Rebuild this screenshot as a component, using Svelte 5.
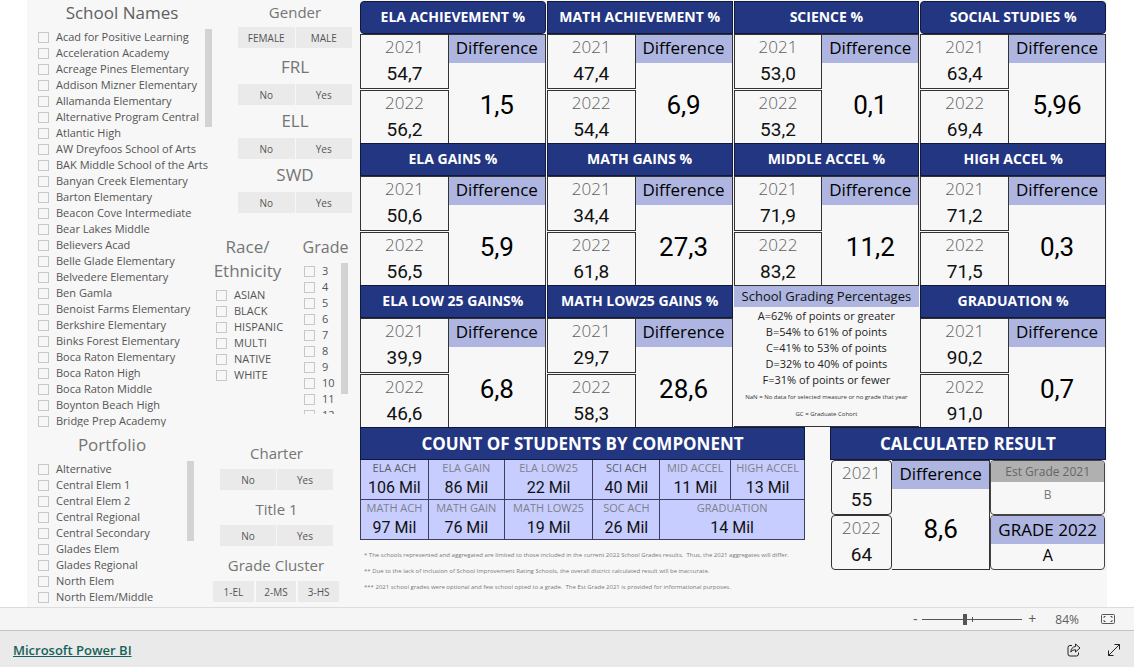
<script lang="ts">
  type Metric = {
    title: string;
    prev: string;
    curr: string;
    diff: string;
    rounded?: boolean;
  };

  const schools = [
    'Acad for Positive Learning',
    'Acceleration Academy',
    'Acreage Pines Elementary',
    'Addison Mizner Elementary',
    'Allamanda Elementary',
    'Alternative Program Central',
    'Atlantic High',
    'AW Dreyfoos School of Arts',
    'BAK Middle School of the Arts',
    'Banyan Creek Elementary',
    'Barton Elementary',
    'Beacon Cove Intermediate',
    'Bear Lakes Middle',
    'Believers Acad',
    'Belle Glade Elementary',
    'Belvedere Elementary',
    'Ben Gamla',
    'Benoist Farms Elementary',
    'Berkshire Elementary',
    'Binks Forest Elementary',
    'Boca Raton Elementary',
    'Boca Raton High',
    'Boca Raton Middle',
    'Boynton Beach High',
    'Bridge Prep Academy'
  ];

  const portfolios = [
    'Alternative',
    'Central Elem 1',
    'Central Elem 2',
    'Central Regional',
    'Central Secondary',
    'Glades Elem',
    'Glades Regional',
    'North Elem',
    'North Elem/Middle'
  ];

  const races = ['ASIAN', 'BLACK', 'HISPANIC', 'MULTI', 'NATIVE', 'WHITE'];
  const grades = ['3', '4', '5', '6', '7', '8', '9', '10', '11', '12'];

  const topToggles = [
    { title: 'Gender', options: ['FEMALE', 'MALE'] },
    { title: 'FRL', options: ['No', 'Yes'] },
    { title: 'ELL', options: ['No', 'Yes'] },
    { title: 'SWD', options: ['No', 'Yes'] }
  ];

  const bottomToggles = [
    { title: 'Charter', options: ['No', 'Yes'] },
    { title: 'Title 1', options: ['No', 'Yes'] },
    { title: 'Grade Cluster', options: ['1-EL', '2-MS', '3-HS'] }
  ];

  // null marks the slot that holds the grading scale
  const metrics: (Metric | null)[] = [
    { title: 'ELA ACHIEVEMENT %', prev: '54,7', curr: '56,2', diff: '1,5', rounded: true },
    { title: 'MATH ACHIEVEMENT %', prev: '47,4', curr: '54,4', diff: '6,9' },
    { title: 'SCIENCE %', prev: '53,0', curr: '53,2', diff: '0,1' },
    { title: 'SOCIAL STUDIES %', prev: '63,4', curr: '69,4', diff: '5,96', rounded: true },
    { title: 'ELA GAINS %', prev: '50,6', curr: '56,5', diff: '5,9' },
    { title: 'MATH GAINS %', prev: '34,4', curr: '61,8', diff: '27,3' },
    { title: 'MIDDLE ACCEL %', prev: '71,9', curr: '83,2', diff: '11,2' },
    { title: 'HIGH ACCEL %', prev: '71,2', curr: '71,5', diff: '0,3' },
    { title: 'ELA LOW 25 GAINS%', prev: '39,9', curr: '46,6', diff: '6,8' },
    { title: 'MATH LOW25 GAINS %', prev: '29,7', curr: '58,3', diff: '28,6' },
    null,
    { title: 'GRADUATION %', prev: '90,2', curr: '91,0', diff: '0,7' }
  ];

  const scale = [
    'A=62% of points or greater',
    'B=54% to 61% of points',
    'C=41% to 53% of points',
    'D=32% to 40% of points',
    'F=31% of points or fewer'
  ];

  const countWidths = [68, 76, 89, 67, 71, 74];
  const countTotal = countWidths.reduce((a, b) => a + b, 0);

  const counts = [
    [
      { label: 'ELA ACH', value: '106 Mil', span: 1, dark: true },
      { label: 'ELA GAIN', value: '86 Mil', span: 1 },
      { label: 'ELA LOW25', value: '22 Mil', span: 1 },
      { label: 'SCI ACH', value: '40 Mil', span: 1, dark: true },
      { label: 'MID ACCEL', value: '11 Mil', span: 1 },
      { label: 'HIGH ACCEL', value: '13 Mil', span: 1 }
    ],
    [
      { label: 'MATH ACH', value: '97 Mil', span: 1 },
      { label: 'MATH GAIN', value: '76 Mil', span: 1 },
      { label: 'MATH LOW25', value: '19 Mil', span: 1 },
      { label: 'SOC ACH', value: '26 Mil', span: 1 },
      { label: 'GRADUATION', value: '14 Mil', span: 2 }
    ]
  ];

  let zoom = $state(84);
</script>

{#snippet checkList(items: string[])}
  <ul class="check-list">
    {#each items as item}
      <li>
        <label><input type="checkbox" />{item}</label>
      </li>
    {/each}
  </ul>
{/snippet}

{#snippet toggle(title: string, options: string[])}
  <section class="toggle" aria-label={title}>
    <h2>{title}</h2>
    <div class="toggle-buttons">
      {#each options as option}
        <button type="button">{option}</button>
      {/each}
    </div>
  </section>
{/snippet}

{#snippet yearBox(year: string, value: string)}
  <div class="year-box">
    <span class="year">{year}</span>
    <span class="value">{value}</span>
  </div>
{/snippet}

{#snippet diffBox(value: string)}
  <div class="diff-box">
    <h3>Difference</h3>
    <p>{value}</p>
  </div>
{/snippet}

<div class="report">
  <aside class="filters">
    <div class="lists">
      <section>
        <h2 class="schools-title">School Names</h2>
        <div class="scroller schools">
          {@render checkList(schools)}
          <div class="scrollbar"></div>
        </div>
      </section>
      <section>
        <h2 class="portfolio-title">Portfolio</h2>
        <div class="scroller portfolio">
          {@render checkList(portfolios)}
          <div class="scrollbar"></div>
        </div>
      </section>
    </div>

    <div class="slicers">
      <div class="toggles top">
        {#each topToggles as t}
          {@render toggle(t.title, t.options)}
        {/each}
      </div>

      <div class="demographics">
        <section class="race">
          <h2>Race/<br />Ethnicity</h2>
          {@render checkList(races)}
        </section>
        <section class="grade">
          <h2>Grade</h2>
          <div class="scroller grades">
            {@render checkList(grades)}
            <div class="scrollbar"></div>
          </div>
        </section>
      </div>

      <div class="toggles bottom">
        {#each bottomToggles as t}
          {@render toggle(t.title, t.options)}
        {/each}
      </div>
    </div>
  </aside>

  <main>
    <div class="metrics">
      {#each metrics as m}
        {#if m}
          <article class="card">
            <h2 class="banner" class:rounded={m.rounded}>{m.title}</h2>
            <div class="card-body">
              <div class="years">
                {@render yearBox('2021', m.prev)}
                {@render yearBox('2022', m.curr)}
              </div>
              {@render diffBox(m.diff)}
            </div>
          </article>
        {:else}
          <article class="scale">
            <h2>School Grading Percentages</h2>
            {#each scale as line}
              <p>{line}</p>
            {/each}
            <small>NaN = No data for selected measure or no grade that year</small>
            <small>GC = Graduate Cohort</small>
          </article>
        {/if}
      {/each}
    </div>

    <div class="summary">
      <section class="counts">
        <h2 class="banner large">COUNT OF STUDENTS BY COMPONENT</h2>
        <table>
          <colgroup>
            {#each countWidths as w}
              <col style:width="{(w / countTotal) * 100}%" />
            {/each}
          </colgroup>
          <tbody>
            {#each counts as row}
              <tr>
                {#each row as cell}
                  <td colspan={cell.span}>
                    <span class="count-label" class:dark={cell.dark}>{cell.label}</span>
                    <span class="count-value">{cell.value}</span>
                  </td>
                {/each}
              </tr>
            {/each}
          </tbody>
        </table>
        <div class="notes">
          <p>* The schools represented and aggregated are limited to those included in the current 2022 School Grades results.&nbsp; Thus, the 2021 aggregates will differ.</p>
          <p>** Due to the lack of inclusion of School Improvement Rating Schools, the overall district calculated result will be inaccurate.</p>
          <p>*** 2021 school grades were optional and few school opted to a grade.&nbsp; The Est Grade 2021 is provided for informational purposes.</p>
        </div>
      </section>

      <section class="result">
        <h2 class="banner large">CALCULATED RESULT</h2>
        <div class="result-body">
          <div class="years">
            {@render yearBox('2021', '55')}
            {@render yearBox('2022', '64')}
          </div>
          {@render diffBox('8,6')}
          <div class="letter-grades">
            <div class="letter estimated">
              <h3>Est Grade 2021</h3>
              <p>B</p>
            </div>
            <div class="letter">
              <h3>GRADE 2022</h3>
              <p>A</p>
            </div>
          </div>
        </div>
      </section>
    </div>
  </main>
</div>

<div class="zoom-bar">
  <button type="button" aria-label="Zoom out" onclick={() => (zoom -= 1)}>-</button>
  <input type="range" min="10" max="186" bind:value={zoom} aria-label="Zoom" />
  <button type="button" aria-label="Zoom in" onclick={() => (zoom += 1)}>+</button>
  <span class="zoom-value">{zoom}%</span>
  <button type="button" class="fit" aria-label="Fit to page">
    <svg width="14" height="12" viewBox="0 0 14 12" fill="none" stroke="#555">
      <rect x="0.5" y="1.5" width="13" height="9" rx="1" />
      <path d="M3 5V3.5H4.5M9.500 3.500H11V5M11 7V8.500H9.500M4.500 8.500H3V7" />
    </svg>
  </button>
</div>

<footer>
  <a href="https://powerbi.microsoft.com">Microsoft Power BI</a>
  <div class="footer-actions">
    <button type="button" aria-label="Share">
      <svg width="14" height="14" viewBox="0 0 14 14" fill="none" stroke="#222" stroke-linejoin="round">
        <path d="M5 2.500H3Q1 2.500 1 4.500V11Q1 13 3 13H9.500Q11.500 13 11.500 11V9.500" />
        <path d="M8.500 1L13 5L8.500 9V6.700Q5.500 6.500 3.800 9Q4.200 4 8.500 3.500Z" />
      </svg>
    </button>
    <button type="button" aria-label="Full screen">
      <svg width="14" height="14" viewBox="0 0 14 14" fill="none" stroke="#222">
        <path d="M1.500 12.500L12.500 1.500M7.500 1.500H12.500V6.500M1.500 7.500V12.500H6.500" />
      </svg>
    </button>
  </div>
</footer>

<style>
  :global(body) {
    margin: 0;
    background: #fff;
    font-family: 'Open Sans', 'Noto Sans', sans-serif;
    color: #605e5c;
  }

  h2,
  h3,
  p,
  ul {
    margin: 0;
    padding: 0;
    font-weight: 400;
  }

  button {
    font: inherit;
    color: inherit;
    border: 0;
    padding: 0;
    background: none;
    cursor: pointer;
  }

  .report {
    display: flex;
    margin: 0 27px;
    background: #f7f7f7;
  }

  /* Filter pane */
  .filters {
    display: flex;
    flex: 0 0 333px;
  }

  .filters h2 {
    color: #757575;
    font-size: 17px;
    line-height: 24px;
    text-align: center;
  }

  .lists {
    width: 185px;
    padding-left: 11px;
    box-sizing: border-box;
  }

  .filters .schools-title {
    padding: 1px 6px 4px 0;
    color: #606060;
    font-size: 17px;
  }

  .filters .portfolio-title {
    padding: 6px 26px 4px 0;
    font-size: 17px;
  }

  .check-list {
    flex: 1;
    list-style: none;
    font-size: 11px;
    line-height: 16px;
    white-space: nowrap;
  }

  .check-list label {
    display: flex;
    align-items: center;
    gap: 7px;
    color: #555;
  }

  .check-list input {
    appearance: none;
    flex: none;
    width: 11px;
    height: 11px;
    margin: 0;
    border: 1px solid #c8c8c8;
  }

  .scroller {
    display: flex;
    overflow: hidden;
  }

  .scroller .check-list {
    min-width: 0;
  }

  .scrollbar {
    width: 7px;
    flex: none;
    background: #d3d3d3;
  }

  .schools {
    height: 398px;
  }

  .schools .scrollbar {
    height: 98px;
  }

  .portfolio {
    padding-right: 18px;
  }

  .portfolio .scrollbar {
    height: 80px;
  }

  .grades {
    height: 151px;
  }

  .grades .scrollbar {
    height: 131px;
  }

  .slicers {
    flex: 1;
  }

  .toggles.top {
    margin: 0 8px 0 26px;
  }

  .toggles.bottom {
    width: 126px;
    margin: 20px 0 0 1px;
  }

  .toggles.bottom .toggle:not(:last-child) {
    padding: 0 6px 0 7px;
  }

  .toggle h2 {
    padding: 4px 0 5px;
  }

  .toggles.top .toggle:first-child {
    margin-bottom: 3px;
  }

  .toggles.top .toggle:first-child h2 {
    padding: 0 0 3px;
    font-size: 15px;
  }

  .toggles.bottom .toggle h2 {
    padding: 7px 0 4px;
    font-size: 15px;
  }

  .toggle-buttons {
    display: flex;
    gap: 1px;
  }

  .toggle-buttons button {
    flex: 1;
    height: 21px;
    background: #eaeaea;
    font-size: 10px;
    color: #555;
  }

  .toggles.bottom .toggle:last-child .toggle-buttons {
    gap: 2px;
  }

  .demographics {
    display: flex;
    margin: 22px 0 0 1px;
  }

  .race {
    width: 69px;
    margin-right: 19px;
  }

  .race .check-list {
    padding: 4px 0 0 3px;
  }

  .grade {
    width: 49px;
  }

  .filters .grade h2 {
    font-size: 16px;
  }

  .grade .scroller {
    margin-top: 4px;
    padding: 0 2px 0 3px;
  }

  /* Metric cards */
  main {
    flex: 1;
    min-width: 0;
    padding: 1px 1px 0 0;
  }

  .metrics {
    display: grid;
    grid-template-columns: repeat(4, minmax(0, 1fr));
    column-gap: 1px;
  }

  .banner {
    height: 33px;
    box-sizing: border-box;
    border: 1px solid #10183c;
    background: #233682;
    color: #fff;
    font-size: 14px;
    font-weight: 700;
    line-height: 30px;
    text-align: center;
    white-space: nowrap;
  }

  .banner.rounded {
    border-radius: 4px;
  }

  .banner.large {
    font-size: 17px;
    line-height: 31px;
  }

  .card-body {
    display: grid;
    grid-template-columns: 89fr 97fr;
    height: 109px;
  }

  .years {
    display: grid;
    grid-template-rows: 1fr 1fr;
    row-gap: 1px;
  }

  .year-box {
    border: 1px solid #333;
    text-align: center;
  }

  .year,
  .value {
    display: block;
  }

  .year {
    color: #606060;
    font-size: 17px;
    font-weight: 300;
    line-height: 24px;
  }

  .value {
    color: #111;
    font-family: Roboto, sans-serif;
    font-size: 19px;
    line-height: 29px;
  }

  .diff-box {
    display: flex;
    flex-direction: column;
    border: 1px solid #333;
    border-left: 0;
    text-align: center;
    color: #000;
  }

  .diff-box h3 {
    padding-bottom: 2px;
    background: #adb5e0;
    font-size: 17px;
    line-height: 26px;
  }

  .diff-box p {
    padding-top: 25px;
    font-family: Roboto, sans-serif;
    font-size: 26px;
    line-height: 34px;
  }

  .scale {
    border: 1px solid #333;
    border-width: 1px 0;
    text-align: center;
    color: #222;
    white-space: nowrap;
  }

  .scale h2 {
    margin-bottom: 1px;
    background: #adb5e0;
    color: #111;
    font-size: 13px;
    line-height: 21px;
  }

  .scale p {
    font-size: 11px;
    line-height: 16px;
  }

  .scale small {
    display: block;
    padding-top: 1px;
    font-size: 6px;
    line-height: 16px;
    color: #333;
  }

  /* Bottom row */
  .summary {
    display: grid;
    grid-template-columns: 445fr 276fr;
    column-gap: 25px;
  }

  table {
    width: 100%;
    border-collapse: collapse;
    table-layout: fixed;
    background: #c7ceff;
  }

  td {
    height: 39px;
    padding: 0;
    border: 1px solid #3c4060;
    border-top: 0;
    text-align: center;
    white-space: nowrap;
  }

  .count-label,
  .count-value {
    display: block;
  }

  .count-label {
    font-size: 11px;
    line-height: 16px;
    color: #808088;
  }

  .count-label.dark {
    color: #5c5c66;
  }

  .count-value {
    font-family: Roboto, sans-serif;
    font-size: 16px;
    line-height: 23px;
    color: #111;
  }

  .notes {
    padding: 7px 0 12px 4px;
    color: #777;
    font-size: 6px;
    line-height: 16px;
    white-space: nowrap;
  }

  .result-body {
    display: grid;
    grid-template-columns: 61fr 99fr 115fr;
    height: 109px;
    padding: 0 1px;
  }

  .result-body .year-box {
    border-radius: 4px;
  }

  .result-body .years {
    row-gap: 0;
  }

  .result-body .diff-box p {
    padding-top: 23px;
  }

  .letter-grades {
    display: flex;
    flex-direction: column;
  }

  .letter {
    flex: 1;
    border: 1px solid #444;
    border-radius: 4px;
    overflow: hidden;
    text-align: center;
    color: #000;
  }

  .letter h3 {
    background: #adb5e0;
    font-size: 17px;
    line-height: 28px;
    white-space: nowrap;
  }

  .letter p {
    font-size: 16px;
    line-height: 23px;
  }

  .letter.estimated {
    color: #777;
  }

  .letter.estimated h3 {
    background: #b0b0b0;
    color: #666;
    font-size: 12px;
    line-height: 21px;
  }

  .letter.estimated p {
    font-size: 12px;
    line-height: 26px;
  }

  /* Zoom bar and footer */
  .zoom-bar {
    display: flex;
    align-items: center;
    justify-content: flex-end;
    height: 22px;
    padding-right: 19px;
    border-top: 1px solid #dcdcdc;
    border-bottom: 1px solid #c4c4c4;
    background: #f5f5f5;
    font-size: 12px;
  }

  .zoom-bar button {
    width: 10px;
    font-size: 14px;
    line-height: 20px;
  }

  .zoom-bar input {
    appearance: none;
    width: 100px;
    height: 11px;
    margin: 0 5px 0 2px;
    background:
      linear-gradient(#555, #555) 50px 3px / 1px 5px no-repeat,
      linear-gradient(#555, #555) 0 5px / 100% 1px no-repeat;
  }

  .zoom-bar input::-webkit-slider-thumb {
    appearance: none;
    width: 4px;
    height: 11px;
    background: #555;
  }

  .zoom-value {
    margin: 0 22px 0 18px;
  }

  .zoom-bar .fit {
    display: flex;
    width: 14px;
  }

  footer {
    display: flex;
    align-items: center;
    justify-content: space-between;
    height: 36px;
    padding: 2px 13px 0;
    box-sizing: border-box;
    background: #eaeaea;
  }

  footer a {
    color: #14635a;
    font-size: 13px;
    font-weight: 600;
  }

  .footer-actions {
    display: flex;
    gap: 26px;
  }

  .footer-actions button {
    display: flex;
  }
</style>
